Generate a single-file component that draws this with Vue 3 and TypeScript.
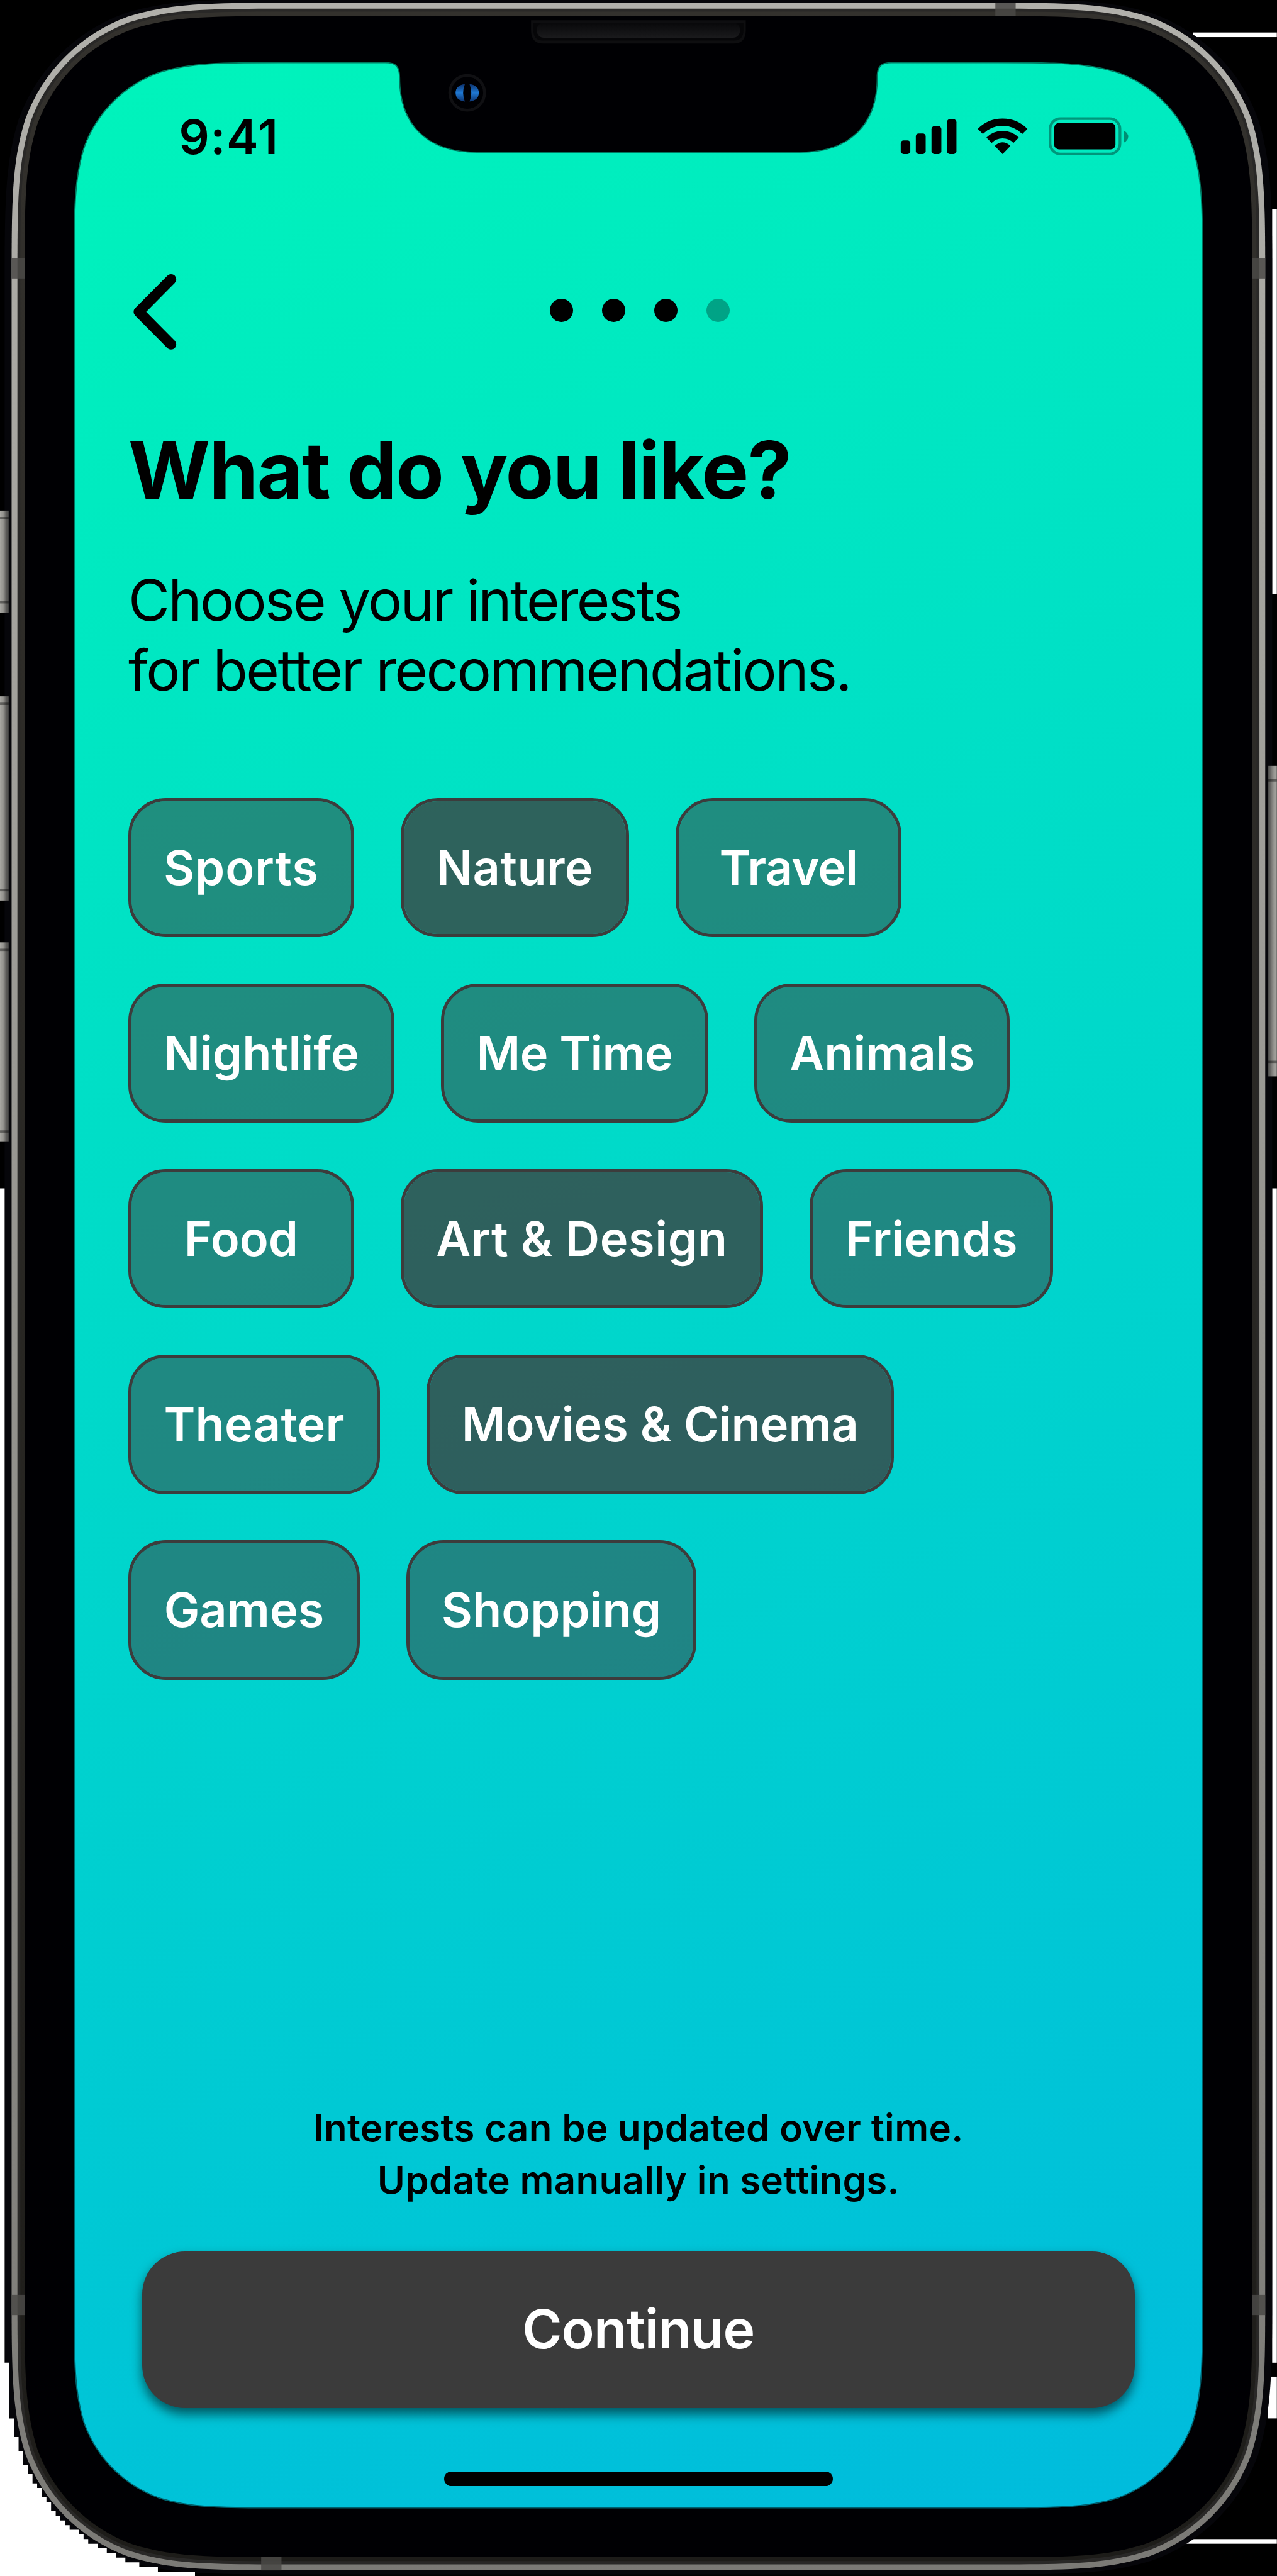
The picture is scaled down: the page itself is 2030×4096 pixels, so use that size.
<script setup lang="ts">
interface Chip {
  label: string
  width: number
  spacing: number
  selected?: boolean
}

const rows: Chip[][] = [
  [
    { label: 'Sports', width: 389, spacing: 0.9 },
    { label: 'Nature', width: 394, spacing: 0.4, selected: true },
    { label: 'Travel', width: 389, spacing: -0.9 },
  ],
  [
    { label: 'Nightlife', width: 459, spacing: 0.1 },
    { label: 'Me Time', width: 460, spacing: -0.7 },
    { label: 'Animals', width: 440, spacing: 0 },
  ],
  [
    { label: 'Food', width: 389, spacing: 0 },
    { label: 'Art & Design', width: 625, spacing: 0.7, selected: true },
    { label: 'Friends', width: 420, spacing: 0.1 },
  ],
  [
    { label: 'Theater', width: 434, spacing: 0.2 },
    { label: 'Movies & Cinema', width: 805, spacing: 0, selected: true },
  ],
  [
    { label: 'Games', width: 399, spacing: 0 },
    { label: 'Shopping', width: 500, spacing: 0 },
  ],
]

const steps = [true, true, true, false]

type Pt = [number, number]

/* One continuous-curvature corner, from the horizontal edge to the vertical one. */
const CORNER: Pt[] = [
  [1.528, 0], [1.0884, 0], [0.8684, 0], [0.6314, 0.0749],
  [0.3728, 0.169], [0.169, 0.3728], [0.0749, 0.6314],
  [0, 0.8684], [0, 1.0884], [0, 1.528],
]

function corner(cx: number, cy: number, sx: number, sy: number, r: number, reverse: boolean): string {
  const pts = CORNER.map(([x, y]): Pt => [cx + sx * x * r, cy + sy * y * r])
  if (reverse) pts.reverse()
  const p = pts.map(([x, y]) => `${x.toFixed(1)} ${y.toFixed(1)}`)
  return `L${p[0]} C${p.slice(1, 4).join(' ')} C${p.slice(4, 7).join(' ')} C${p.slice(7, 10).join(' ')} `
}

function shape(l: number, t: number, r: number, b: number, rad: number, top = ''): string {
  const body =
    top +
    corner(r, t, -1, 1, rad, false) +
    corner(r, b, -1, -1, rad, true) +
    corner(l, b, 1, -1, rad, false) +
    corner(l, t, 1, 1, rad, true) +
    'Z'
  return 'M' + body.replace(/^[ML]/, '')
}

const shell = shape(8, -1, 2192, 4437, 326)
const metal = shape(20, 5, 2180, 4429.5, 317)
const bezelOuter = shape(30, 15, 2170, 4419.5, 307)
const bezelMid = shape(35, 20, 2165, 4414, 302)
const glass = shape(42.5, 28, 2157.5, 4407, 294)
const notch =
  'M664 107 C682 107 689.5 113 689.5 134 C689.5 213 735 261.5 822 261.5 ' +
  'L1378 261.5 C1465 261.5 1510.5 213 1510.5 134 C1510.5 113 1518 107 1536 107 '
const screen = shape(127, 107, 2073, 4323, 231, notch)

/* Stepped white area outside the lower left corner: [x, y where that step begins]. */
const STEPS: Pt[] = [
  [8, 2048], [16, 4072], [24, 4168], [32, 4200], [40, 4224], [48, 4248], [56, 4264],
  [64, 4280], [72, 4288], [80, 4304], [88, 4312], [96, 4328], [104, 4336], [112, 4344],
  [120, 4352], [136, 4360], [144, 4368], [152, 4376], [168, 4384], [184, 4392],
  [200, 4400], [216, 4408], [240, 4416], [272, 4424], [336, 4432],
]
const pageCorner = 'M0 2048 ' + STEPS.map(([x, y]) => `V${y} H${x}`).join(' ') + ' V4440 H0 Z'

const leftKeys: Pt[] = [[880, 176], [1200, 352], [1624, 344]]
</script>

<template>
  <main class="stage">
    <svg class="device" viewBox="0 0 2200 4440" aria-hidden="true">
      <defs>
        <linearGradient id="metalFill" x1="0" y1="0" x2="0" y2="1">
          <stop offset="0" stop-color="#b1b0ab" />
          <stop offset=".25" stop-color="#a3a29d" />
          <stop offset="1" stop-color="#7b7a76" />
        </linearGradient>
        <linearGradient id="rimFill" x1="0" y1="0" x2="0" y2="1">
          <stop offset="0" stop-color="#33312d" />
          <stop offset="1" stop-color="#1d1c19" />
        </linearGradient>
        <linearGradient id="screenFill" gradientUnits="userSpaceOnUse" x1="308" y1="40" x2="1892" y2="4390">
          <stop offset="0" stop-color="#00f4bb" />
          <stop offset=".5" stop-color="#00d7cb" />
          <stop offset="1" stop-color="#00bbdd" />
        </linearGradient>
        <linearGradient id="keyLeft" x1="0" y1="0" x2="1" y2="0">
          <stop offset="0" stop-color="#a9a8a3" />
          <stop offset=".45" stop-color="#8d8c88" />
          <stop offset=".7" stop-color="#5c5b59" />
          <stop offset="1" stop-color="#484847" />
        </linearGradient>
        <linearGradient id="keyRight" x1="1" y1="0" x2="0" y2="0">
          <stop offset="0" stop-color="#a9a8a3" />
          <stop offset=".45" stop-color="#8d8c88" />
          <stop offset=".7" stop-color="#6c6b68" />
          <stop offset="1" stop-color="#484847" />
        </linearGradient>
        <linearGradient id="lens" x1="0" y1="0" x2="0" y2="1">
          <stop offset="0" stop-color="#0d3470" />
          <stop offset=".5" stop-color="#1f78d2" />
          <stop offset="1" stop-color="#0d3470" />
        </linearGradient>
        <linearGradient id="grille" x1="0" y1="0" x2="0" y2="1">
          <stop offset="0" stop-color="#08080a" />
          <stop offset="1" stop-color="#1a1a1c" />
        </linearGradient>
      </defs>

      <rect width="2200" height="4440" fill="#000" />
      <g fill="#fff">
        <rect x="2056" y="56" width="144" height="8" />
        <rect x="2192" y="360" width="8" height="664" />
        <rect x="2192" y="2048" width="8" height="2024" />
        <rect x="2184" y="4096" width="16" height="72" />
        <rect x="2040" y="4376" width="160" height="8" />
      </g>

      <path :d="shell" fill="#06060a" />
      <path :d="pageCorner" fill="#fff" />
      <path :d="metal" fill="url(#metalFill)" />
      <path :d="bezelOuter" fill="#292827" />
      <path :d="bezelMid" fill="url(#rimFill)" />
      <path :d="glass" fill="#000003" />

      <g fill="#4a4946" fill-opacity=".85">
        <rect x="20" y="445" width="23" height="35" />
        <rect x="2157" y="445" width="23" height="35" />
        <rect x="20" y="3955" width="23" height="35" />
        <rect x="2157" y="3955" width="23" height="35" />
        <rect x="1715" y="5" width="35" height="23" />
        <rect x="450" y="4407" width="35" height="23" />
      </g>

      <g v-for="[y, h] in leftKeys" :key="y">
        <rect x="0" :y="y" width="15" :height="h" fill="url(#keyLeft)" />
        <rect x="0" :y="y + 11" width="15" height="4" fill="#000" fill-opacity=".4" />
        <rect x="0" :y="y + h - 20" width="15" height="4" fill="#000" fill-opacity=".4" />
      </g>
      <rect x="2185" y="1320" width="15" height="535" fill="url(#keyRight)" />
      <rect x="2185" y="1342" width="15" height="5" fill="#000" fill-opacity=".4" />
      <rect x="2185" y="1828" width="15" height="5" fill="#000" fill-opacity=".4" />

      <path :d="screen" fill="url(#screenFill)" />
      <path :d="screen" fill="none" stroke="#000" stroke-opacity=".5" stroke-width="4" />

      <path d="M915 35 H1285 V52 Q1285 75 1264 75 H936 Q915 75 915 52 Z" fill="#0e0e10" />
      <path d="M919 39 H1281 V52 Q1281 70 1264 70 H936 Q919 70 919 52 Z" fill="#060608" />
      <rect x="925" y="39" width="350" height="26" rx="12" fill="url(#grille)" />

      <circle cx="805" cy="160" r="30" fill="none" stroke="#101013" stroke-width="5" />
      <path d="M801 145 Q785 147 785 160 Q785 173 801 175 Q795 160 801 145Z" fill="url(#lens)" />
      <path d="M809 145 Q825 147 825 160 Q825 173 809 175 Q815 160 809 145Z" fill="url(#lens)" />
    </svg>

    <section class="screen">
      <header class="status">
        <span class="time">9:41</span>
        <svg class="indicators" width="396" height="72" viewBox="1550 199 396 72" aria-hidden="true">
          <rect x="1552" y="241.5" width="16.5" height="23.5" rx="5" />
          <rect x="1578" y="229.5" width="17" height="35.5" rx="5" />
          <rect x="1605" y="217" width="17" height="48" rx="5" />
          <rect x="1631.5" y="205" width="16.5" height="60" rx="5" />
          <g fill="none" stroke="#000">
            <path d="M1689.1 226.1 A54.3 54.3 0 0 1 1765.9 226.1" stroke-width="12.5" />
            <path d="M1704.2 241.2 A33 33 0 0 1 1750.8 241.2" stroke-width="13" />
          </g>
          <path d="M1727.5 265 L1715 252 Q1714 251 1715.4 249.8 Q1727.5 240 1739.6 249.8 Q1741 251 1740 252 Z" />
          <rect x="1809.3" y="204" width="120.5" height="61" rx="18" fill="none" stroke="#000" stroke-opacity=".36" stroke-width="4.6" />
          <rect x="1816.5" y="211.5" width="105.5" height="45.5" rx="8" />
          <path d="M1937 225 Q1944 229 1944 235 Q1944 241 1937 245 Z" fill-opacity=".4" />
        </svg>
      </header>

      <nav class="nav">
        <button class="back" type="button" aria-label="Back">
          <svg width="76" height="132" viewBox="0 0 76 132">
            <path d="M66 10 L10.5 66 L66 122" fill="none" stroke="#000" stroke-width="18" stroke-linecap="round" stroke-linejoin="round" />
          </svg>
        </button>
        <div class="steps">
          <i v-for="(done, i) in steps" :key="i" class="step" :class="{ pending: !done }"></i>
        </div>
      </nav>

      <h1 class="title">What do you like?</h1>
      <p class="lead"><span class="lead-first">Choose your interests</span><br />for better recommendations.</p>

      <div class="chips">
        <div v-for="(row, i) in rows" :key="i" class="row">
          <button
            v-for="chip in row"
            :key="chip.label"
            type="button"
            class="chip"
            :class="{ selected: chip.selected }"
            :style="{ width: chip.width + 'px', letterSpacing: chip.spacing + 'px' }"
          >{{ chip.label }}</button>
        </div>
      </div>

      <footer class="footer">
        <p class="note">Interests can be updated over time.<br />Update manually in settings.</p>
        <button class="continue" type="button">Continue</button>
        <div class="home"></div>
      </footer>
    </section>
  </main>
</template>

<style>
html,
body {
  margin: 0;
  background: #000;
  overflow: hidden;
}
</style>

<style scoped>
.stage {
  position: relative;
  width: 2200px;
  height: 4440px;
  overflow: hidden;
  zoom: 0.9226;
  font-family: Inter, "Liberation Sans", sans-serif;
  color: #000;
}

.device {
  position: absolute;
  inset: 0;
  width: 2200px;
  height: 4440px;
}

.screen {
  position: relative;
  box-sizing: border-box;
  width: 2200px;
  height: 4440px;
  padding: 185px 221px 155px;
  display: flex;
  flex-direction: column;
}

button {
  font: inherit;
  margin: 0;
  padding: 0;
  border: 0;
  background: none;
}

.status {
  display: flex;
  justify-content: space-between;
  align-items: center;
  height: 100px;
  padding: 0 33px 0 87px;
}

.time {
  font-size: 82.5px;
  font-weight: 600;
  line-height: 100px;
  letter-spacing: 1.6px;
}

.indicators {
  display: block;
}

.nav {
  position: relative;
  display: flex;
  align-items: center;
  justify-content: center;
  height: 132px;
  margin-top: 186px;
}

.back {
  position: absolute;
  left: 8px;
  top: 0;
  height: 132px;
}

.back svg {
  display: block;
}

.steps {
  display: flex;
  gap: 50px;
  margin: -4px 0 0 5px;
}

.step {
  width: 40px;
  height: 40px;
  border-radius: 50%;
  background: #000;
}

.step.pending {
  opacity: 0.3;
}

.title {
  margin: 128px 0 0;
  font-size: 136px;
  font-weight: 700;
  line-height: 160px;
  letter-spacing: -1.95px;
  white-space: nowrap;
}

.lead {
  margin: 84px 0 0;
  font-size: 98px;
  font-weight: 400;
  line-height: 120px;
  letter-spacing: -2.7px;
  white-space: nowrap;
}

.lead-first {
  letter-spacing: -2.95px;
}

.chips {
  display: flex;
  flex-direction: column;
  gap: 80px;
  margin-top: 160px;
}

.row {
  display: flex;
  gap: 80px;
}

.chip {
  box-sizing: border-box;
  flex: none;
  height: 240px;
  border: 5.5px solid #3c3c3c;
  border-radius: 64px;
  background: rgba(60, 60, 60, 0.51);
  background-clip: padding-box;
  color: #fff;
  font-size: 82px;
  font-weight: 600;
  line-height: 229px;
  text-align: center;
  white-space: nowrap;
}

.chip.selected {
  background-color: rgba(60, 60, 60, 0.77);
}

.footer {
  margin-top: auto;
  display: flex;
  flex-direction: column;
  align-items: center;
}

.note {
  margin: 0;
  font-size: 65px;
  font-weight: 600;
  line-height: 90px;
  letter-spacing: 0.35px;
  text-align: center;
}

.continue {
  width: 1710px;
  height: 270px;
  margin-top: 78px;
  border-radius: 74px;
  background: #3b3b3b;
  box-shadow: 0 10px 18px rgba(0, 0, 0, 0.55);
  color: #fff;
  font-size: 93px;
  font-weight: 600;
  line-height: 260px;
  letter-spacing: -1px;
}

.home {
  width: 670px;
  height: 25px;
  margin-top: 110px;
  border-radius: 12.5px;
  background: #000;
}
</style>
